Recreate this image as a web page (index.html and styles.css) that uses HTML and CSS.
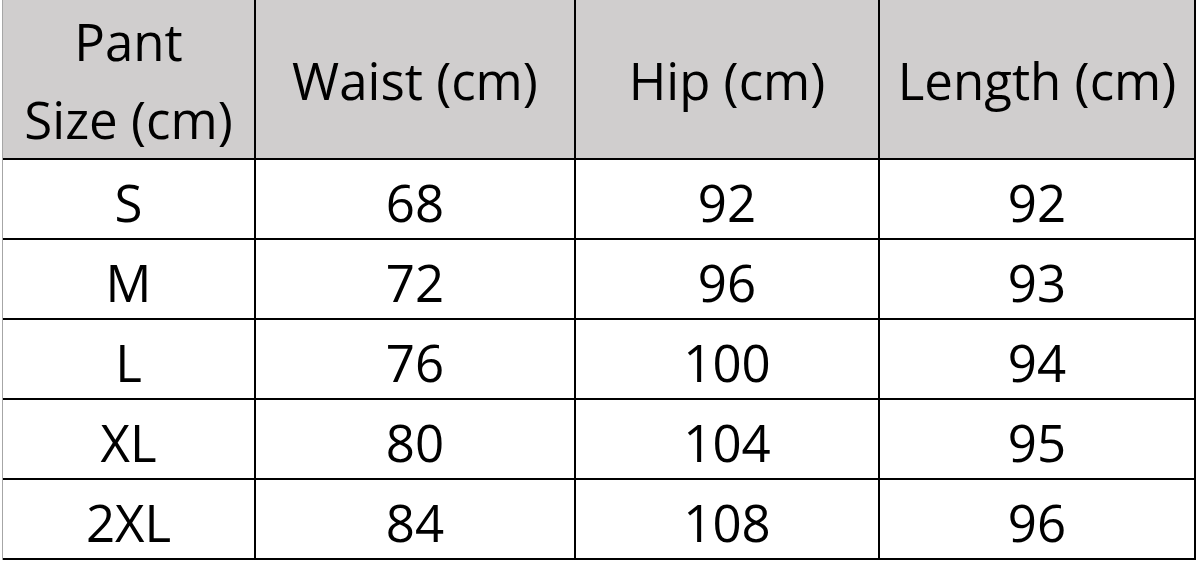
FILE: index.html
```html
<!DOCTYPE html>
<html>
<head>
<meta charset="utf-8">
<link rel="stylesheet" href="styles.css">
</head>
<body>
<div class="wrap">
<table class="sizes">
<colgroup>
<col class="c1"><col class="c2"><col class="c3"><col class="c4">
</colgroup>
<thead>
<tr>
<th>Pant<br>Size (cm)</th>
<th>Waist (cm)</th>
<th>Hip (cm)</th>
<th>Length (cm)</th>
</tr>
</thead>
<tbody>
<tr><td>S</td><td>68</td><td>92</td><td>92</td></tr>
<tr><td>M</td><td>72</td><td>96</td><td>93</td></tr>
<tr><td>L</td><td>76</td><td>100</td><td>94</td></tr>
<tr><td>XL</td><td>80</td><td>104</td><td>95</td></tr>
<tr><td>2XL</td><td>84</td><td>108</td><td>96</td></tr>
</tbody>
</table>
</div>
</body>
</html>
```
FILE: styles.css
```css
html, body {
  margin: 0;
  padding: 0;
  background: #ffffff;
}
.wrap {
  padding-left: 2px;
  width: 1194px;
  height: 562px;
  overflow: hidden;
}
.sizes {
  border-collapse: separate;
  border-spacing: 0;
  border-left: 1px solid #a6a6a6;
  table-layout: fixed;
  width: 1194px;
  font-family: "Open Sans", "Liberation Sans", sans-serif;
  font-size: 51px;
  color: #000;
}
.c1 { width: 253px; }
.c2 { width: 320px; }
.c3 { width: 304px; }
.c4 { width: 316px; }
.sizes th,
.sizes td {
  border-right: 2px solid #000;
  border-bottom: 2px solid #000;
  text-align: center;
  vertical-align: top;
  white-space: nowrap;
}
.sizes th {
  background: #d0cece;
  font-weight: normal;
  line-height: 78px;
  padding: 2px 0 0 0;
  height: 156px;
  vertical-align: middle;
}
.sizes td {
  line-height: 72px;
  padding: 6px 0 0 0;
}
```
